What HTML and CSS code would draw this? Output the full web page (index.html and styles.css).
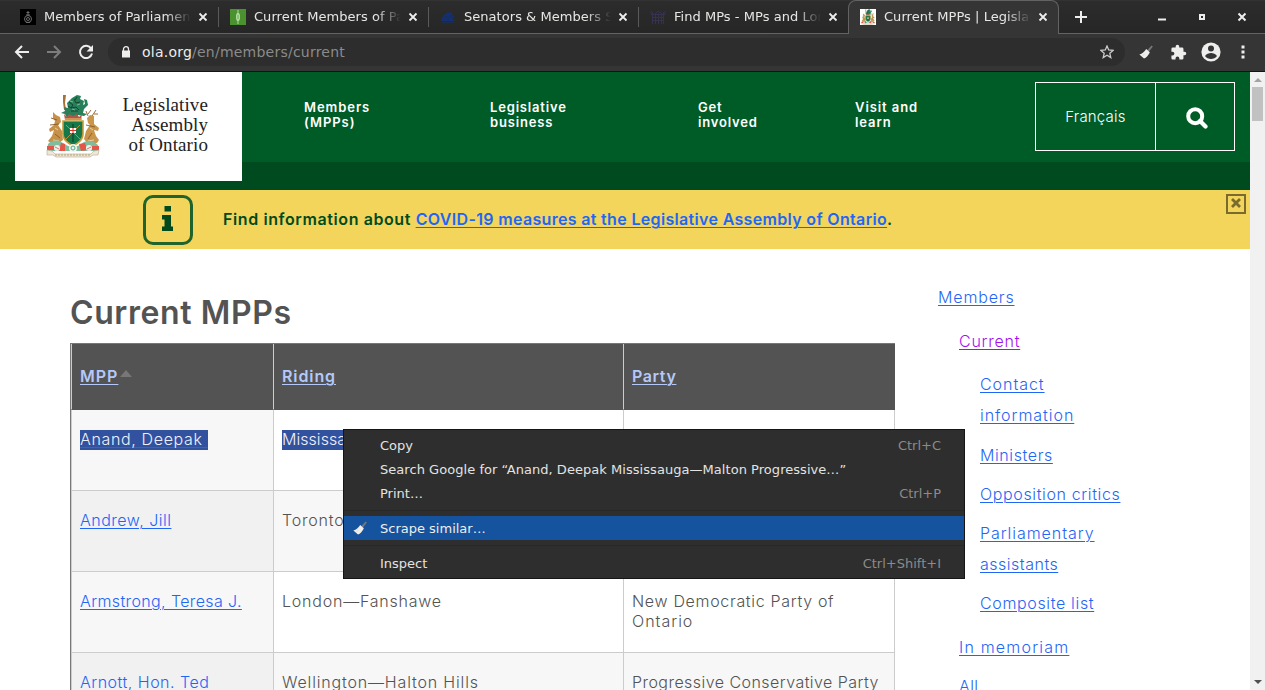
FILE: index.html
```html
<!DOCTYPE html>
<html lang="en">
<head>
<meta charset="utf-8">
<title>Current MPPs | Legislative Assembly of Ontario</title>
<link rel="stylesheet" href="styles.css">
</head>
<body>
<svg class="defs" width="0" height="0">
  <defs>
    <symbol id="crest" viewBox="0 0 54 64">
      <path d="M17 1l3 0-1 8 1 7h-2l-1-8z" fill="#a9713a"/>
      <path d="M21 9l5-5 5-3 4 1-1 3 4 2-1 4 2-1-1-5 3 1 1 5-4 4-1 4 4 1-3 2-6-1-3 3h-8l-2-4-4-1 4-2-1-4 4 1z" fill="#28805a"/>
      <path d="M23 8l4 3-2 3 5-1 3 3M28 5l2 4 4-1M25 17h7M31 3l-2 3M22 12l3 2" stroke="#12442f" fill="none"/>
      <path d="M24 7l3 1M31 11l3-1M26 15l3 1" stroke="#9cc9b4" stroke-width=".7"/>
      <path d="M18 20l3 3 2-3 4 2 4-2 2 3 3-3-1 6H19z" fill="#b0564a"/>
      <path d="M19 25h17" stroke="#d9a95a" stroke-width="1.500"/>
      <path d="M7 18l3 3 4 2 1 5-3 3 4 6 1 9-4 3H5l-3-2 4-5 2-6-4 2-1-3 5-4 1-4-2-3z" fill="#c6924a"/>
      <path d="M48 22l-4-1-3 3 1 5 2 2-4 6-2 8 3 4h10l2-3-3-4-2-6 4 1 1-3-5-4z" fill="#c9954a"/>
      <path d="M42 22l-2-5m2 3l3-4m1 6l4-6m-2 4l4 0M5 24l6 2M4 31l9-1M40 31l9 2M9 40l5 4M46 39l-4 6" stroke="#8b5a25" fill="none" stroke-width=".9"/>
      <path d="M9 34l3 2M44 34l3 2M7 46l6 1M42 47l6-1" stroke="#ecd3a4"/>
      <path d="M17 27h20v13c0 6-5 9-10 12-5-3-10-6-10-12z" fill="#157848" stroke="#c99b3b" stroke-width="1.600"/>
      <path d="M20 31l14 14M34 31L20 45" stroke="#b3913f" stroke-width="1"/>
      <path d="M27 30v18" stroke="#0d4e30" stroke-width="1.500"/>
      <path d="M24 34h6v5h-6z" fill="#fff"/><path d="M24 36.500h6M27 34v5" stroke="#d9352d"/>
      <path d="M2 50c6-6 12-3 15-1l5 3h10l6-4c6-2 10-1 14 3l1 6H1z" fill="#7fbd9f"/>
      <path d="M1 52h7v4H1zM15 49l4 1v7h-6zM33 50l6-1 2 7-6 1zM46 52h7v4h-7z" fill="#e5564a"/>
      <circle cx="11" cy="54" r="3" fill="#f3eeec"/><circle cx="27" cy="54" r="4" fill="#edf5f2"/><circle cx="43" cy="54" r="3" fill="#f3eeec"/>
      <circle cx="27" cy="54" r="2" fill="none" stroke="#57a583"/><path d="M9 53l4 2M41 55l4-2" stroke="#e2756b"/>
      <path d="M1 56l5 1 3 3h36l3-3 5-1-1 5h-5l-3 2H10l-3-2H1z" fill="#eee8dc" stroke="#b8a78a" stroke-width=".6"/>
      <path d="M9 61h36" stroke="#b59f78" stroke-dasharray="2 1"/>
    </symbol>
    <symbol id="broom" viewBox="0 0 16 16">
      <path d="M9 6.500L13.500 1.500l1.300 1.100L10.700 8z" fill="#777"/>
      <path d="M8.200 5l3.600 3.200-.6 1.200c-1.200 2.300-2.800 3.900-5.200 5.200L1.400 10.500c3-.8 4.800-2.500 6.800-5.500z" fill="#eeeeec"/>
      <path d="M4 12l3-2.200" stroke="#ccc" stroke-width=".5"/>
    </symbol>
    <symbol id="cross" viewBox="0 0 10 10"><path d="M1.500 1.500l7 7M8.500 1.500l-7 7" stroke="#eeeeec" stroke-width="1.800"/></symbol>
  </defs>
</svg>

<div class="window">
  <header class="tabstrip">
    <div class="tab">
      <svg class="favicon" viewBox="0 0 16 16"><path fill="#000" d="M0 0h16v16H0z"/><g fill="none" stroke="#6c6c6c"><circle cx="8" cy="10" r="3.500"/><circle cx="8" cy="10" r="1.500"/><path d="M8 2v4M6.500 3.500h3M6 6h4M6 13.500h4"/></g></svg>
      <span class="tab-title">Members of Parliament</span><svg class="close"><use href="#cross"/></svg>
    </div>
    <div class="tab">
      <svg class="favicon" viewBox="0 0 16 16"><path fill="#4b9130" d="M0 0h16v16H0z"/><path d="M8 1v14" stroke="#b5dca5"/><path d="M7 4h2l1 2v4l-1 2H7l-1-2V6z" fill="#a9d996"/><path d="M8 6v4" stroke="#6eae56"/></svg>
      <span class="tab-title">Current Members of Parl</span><svg class="close"><use href="#cross"/></svg>
    </div>
    <div class="tab">
      <svg class="favicon" viewBox="0 0 16 16"><path d="M1 12c0-3 2-4 3-6l3-2 1-1 1 1 3-1 0 3 3 1-2 1 1 4z" fill="#123078"/><path d="M3 11l3-4 2 4 3-5 2 5M2 13.500h12" stroke="#202d48" fill="none"/></svg>
      <span class="tab-title">Senators &amp; Members Sea</span><svg class="close"><use href="#cross"/></svg>
    </div>
    <div class="tab tab-last">
      <svg class="favicon" viewBox="0 0 16 16"><path d="M2.500 3v12M5.500 4v11M8.500 4v11M11.500 4v11M13.500 3v12M1 5.500h14M2 8.500h12M2 11.500h12M6 4l2-2 3 2M1 2v3M15 2v3" stroke="#37304f" fill="none"/></svg>
      <span class="tab-title">Find MPs - MPs and Lords</span><svg class="close"><use href="#cross"/></svg>
    </div>
    <div class="tab tab-active">
      <svg class="favicon" viewBox="0 0 16 16"><path fill="#fff" d="M0 0h16v16H0z"/><use href="#crest" width="16" height="16"/></svg>
      <span class="tab-title">Current MPPs | Legislative</span><svg class="close"><use href="#cross"/></svg>
    </div>
    <svg class="newtab" viewBox="0 0 12 12"><path d="M6 0v12M0 6h12" stroke="#eeeeec" stroke-width="2"/></svg>
    <svg class="controls" viewBox="0 0 90 12"><path d="M0 8.500h8" stroke="#eeeeec" stroke-width="2"/><path d="M42 4h4v4h-4z" stroke="#eeeeec" stroke-width="2" fill="none"/><path d="M80.500 2.500l7 7M87.500 2.500l-7 7" stroke="#eeeeec" stroke-width="2"/></svg>
  </header>

  <div class="toolbar">
    <svg class="tool back" viewBox="0 0 16 16"><path d="M15 8H2M8 2L2 8l6 6" stroke="#eeeeec" stroke-width="2" fill="none"/></svg>
    <svg class="tool forward" viewBox="0 0 16 16"><path d="M1 8h13M8 2l6 6-6 6" stroke="#7d7d7c" stroke-width="2" fill="none"/></svg>
    <svg class="tool reload" viewBox="0 0 16 16"><path d="M13.200 4.600A6.100 6.100 0 1 0 14 9.500" stroke="#eeeeec" stroke-width="2" fill="none"/><path d="M15 1v6.500H8.500z" fill="#eeeeec"/></svg>
    <div class="omnibox">
      <svg class="lock" viewBox="0 0 10 12"><path d="M1 4.500h8v7H1z" fill="#eeeeec"/><path d="M2.500 5V3.200a2.500 2.500 0 0 1 5 0V5" stroke="#eeeeec" stroke-width="1.300" fill="none"/></svg>
      <span class="url"><b>ola.org</b>/en/members/current</span>
      <svg class="star" viewBox="0 0 14 14"><path d="M7 1l1.700 4 4.400.4-3.300 2.900 1 4.300L7 10.300l-3.800 2.300 1-4.300L.9 5.400 5.300 5z" stroke="#ccccca" stroke-width="1.300" fill="none"/></svg>
    </div>
    <svg class="ext-broom"><use href="#broom"/></svg>
    <svg class="ext-puzzle" viewBox="0 0 24 24"><path fill="#eeeeec" d="M20.500 11H19V7a2 2 0 0 0-2-2h-4V3.500a2.500 2.500 0 0 0-5 0V5H4a2 2 0 0 0-2 2v3.800h1.500a2.700 2.700 0 0 1 0 5.400H2V20a2 2 0 0 0 2 2h3.800v-1.500a2.700 2.700 0 0 1 5.400 0V22H17a2 2 0 0 0 2-2v-4h1.500a2.500 2.500 0 0 0 0-5z"/></svg>
    <svg class="ext-user" viewBox="0 0 20 20"><circle cx="10" cy="10" r="9.600" fill="#eeeeec"/><circle cx="10" cy="6.500" r="3" fill="#353535"/><path d="M4 14c1-2 4-3 6-3s5 1 6 3c-1 2-4 3-6 3s-5-1-6-3z" fill="#353535"/></svg>
    <svg class="ext-more" viewBox="0 0 4 14"><path d="M.5.500h3v3h-3zM.5 5.500h3v3h-3zM.5 10.500h3v3h-3z" fill="#eeeeec"/></svg>
  </div>

  <div class="viewport">
    <div class="page">
      <div class="masthead">
        <div class="logo">
          <svg class="logo-crest"><use href="#crest"/></svg>
          <div class="logo-name">Legislative<br>Assembly<br>of Ontario</div>
        </div>
        <nav class="mainnav">
          <a class="nav-members">Members<br>(MPPs)</a>
          <a class="nav-business">Legislative<br>business</a>
          <a class="nav-get">Get<br>involved</a>
          <a class="nav-visit">Visit and<br>learn</a>
        </nav>
        <div class="actions">
          <a class="lang">Français</a>
          <svg class="search" viewBox="0 0 22 22"><circle cx="9.200" cy="9.200" r="7" stroke="#fff" stroke-width="4" fill="none"/><path d="M14 14l5.500 5.500" stroke="#fff" stroke-width="4.200" stroke-linecap="round"/></svg>
        </div>
      </div>
      <div class="notice">
        <div class="info"><svg viewBox="0 0 12 25"><path d="M3.500 0H10v5.500H3.500zM1 9h9v11.500h2V25H1v-4.500h2.500v-7H1z" fill="#004a1e"/></svg></div>
        <p class="notice-text">Find information about <a>COVID-19 measures at the Legislative Assembly of Ontario</a>.</p>
        <div class="dismiss"><svg viewBox="0 0 10 10"><path d="M1 1l8 8M9 1L1 9" stroke="#796b2d" stroke-width="2.800"/></svg></div>
      </div>
      <div class="content">
        <main>
          <h1>Current MPPs</h1>
          <div class="table">
            <div class="row head"><div><a class="t-mpp">MPP</a><i class="sort"></i></div><div><a class="t-riding">Riding</a></div><div><a class="t-party">Party</a></div></div>
            <div class="row"><div><a class="sel t-anand">Anand, Deepak&nbsp;</a></div><div><span class="sel t-miss">Mississauga—Malton</span></div><div></div></div>
            <div class="row alt"><div><a class="t-andrew">Andrew, Jill</a></div><div><span class="t-toronto">Toronto—St. Paul's</span></div><div></div></div>
            <div class="row"><div><a class="t-armstrong">Armstrong, Teresa J.</a></div><div><span class="t-london">London—Fanshawe</span></div><div><span class="t-ndp">New Democratic Party of</span><br><span class="t-ontario">Ontario</span></div></div>
            <div class="row alt"><div><a class="t-arnott">Arnott, Hon. Ted</a></div><div><span class="t-well">Wellington—Halton Hills</span></div><div><span class="t-pc">Progressive Conservative Party</span></div></div>
          </div>
        </main>
        <aside>
          <a class="s-members">Members</a>
          <a class="l2 current">Current</a>
          <a class="l3 s-contact">Contact<br>information</a>
          <a class="l3 s-ministers">Ministers</a>
          <a class="l3 s-opp">Opposition critics</a>
          <a class="l3 s-parl">Parliamentary<br><span class="s-assist">assistants</span></a>
          <a class="l3 s-comp">Composite list</a>
          <a class="l2 s-mem">In memoriam</a>
          <a class="l2 s-all">All</a>
        </aside>
      </div>
    </div>
    <div class="scrollbar"><i class="up"></i><i class="thumb"></i><i class="down"></i></div>
  </div>

  <div class="menu">
    <div class="item"><span>Copy</span><kbd>Ctrl+C</kbd></div>
    <div class="item"><span class="m-search">Search Google for “Anand, Deepak Mississauga—Malton Progressive…”</span></div>
    <div class="item"><span>Print…</span><kbd>Ctrl+P</kbd></div>
    <hr>
    <div class="item hot"><svg class="item-icon"><use href="#broom"/></svg><span>Scrape similar…</span></div>
    <hr class="wide">
    <div class="item"><span>Inspect</span><kbd>Ctrl+Shift+I</kbd></div>
  </div>
</div>
</body>
</html>
```
FILE: styles.css
```css
* { box-sizing: border-box; }
body { margin: 0; overflow: hidden; background: #fff; }
svg { display: block; flex: none; }
.defs { position: absolute; }
.window { position: relative; width: 1265px; height: 690px; display: flex; flex-direction: column; overflow: hidden; }

/* Browser chrome */
.tabstrip { flex: none; height: 34px; display: flex; background: linear-gradient(#383838 0, #2c2c2c 1px, #262626 100%); border-bottom: 1px solid #636363; padding-left: 9px; font: 13px "DejaVu Sans", sans-serif; color: #e6e6e4; }
.tab { flex: none; width: 210px; height: 33px; display: flex; align-items: center; padding: 0 10px 0 11px; background: linear-gradient(#5a5a5a, #5a5a5a) 209px 7px / 1px 20px no-repeat; }
.tab-last { width: 209px; background: none; }
.tab-active { width: 211px; height: 34px; padding: 0 10px 1px 11px; background: #353535; border: 1px solid #636363; border-bottom: 0; border-radius: 8px 8px 0 0; }
.favicon { width: 16px; height: 16px; margin-right: 8px; }
.tab-title { width: 147px; flex: none; line-height: 20px; overflow: hidden; white-space: nowrap; letter-spacing: .04px; -webkit-mask-image: linear-gradient(90deg, #000 122px, transparent 147px); mask-image: linear-gradient(90deg, #000 122px, transparent 147px); }
.close { width: 10px; height: 10px; margin-left: 7px; }
.newtab { width: 12px; height: 12px; margin: 11px 0 0 16px; }
.controls { width: 90px; height: 12px; margin: 11px 0 0 71px; }
.toolbar { flex: none; height: 38px; display: flex; align-items: center; background: #353535; border-bottom: 1px solid #141414; padding: 0 0 1px 14px; }
.tool { width: 16px; height: 16px; margin-right: 16px; }
.reload { margin-right: 14px; }
.omnibox { width: 1017px; height: 28px; border-radius: 14px; background: #2d2d2d; display: flex; align-items: center; padding: 0 11px 0 13px; }
.lock { width: 10px; height: 12px; margin-right: 11px; }
.url { flex: 1; font: 14px/20px "DejaVu Sans", sans-serif; letter-spacing: .23px; color: #8b8b8a; }
.url b { font-weight: 400; color: #eeeeec; }
.star { width: 14px; height: 14px; }
.ext-broom { width: 16px; height: 16px; margin-left: 13px; }
.ext-puzzle { width: 17px; height: 17px; margin-left: 16px; }
.ext-user { width: 20px; height: 20px; margin-left: 14px; }
.ext-more { width: 4px; height: 14px; margin-left: 20px; }

/* Page */
.viewport { flex: 1; min-height: 0; display: flex; }
.page { width: 1250px; flex: none; height: 618px; overflow: hidden; font: 300 16px/20px Inter, sans-serif; color: #535353; }
.masthead { height: 118px; padding: 0 15px; display: flex; background: linear-gradient(#005c27 90px, #004a1f 90px); }
.logo { width: 227px; height: 109px; flex: none; background: #fff; display: flex; padding: 22px 34px 0 31px; justify-content: space-between; }
.logo-crest { width: 54px; height: 64px; }
.logo-name { font: 19px/20px "Liberation Serif", serif; letter-spacing: .1px; color: #222; text-align: right; padding-top: 1px; }
.mainnav { display: flex; flex: 1; padding: 28px 0 0 62px; color: #fff; font-weight: 600; font-size: 13px; line-height: 15px; letter-spacing: .82px; }
.nav-members { width: 186px; letter-spacing: .95px; }
.nav-business { width: 208px; }
.nav-get { width: 157px; }
.nav-visit { letter-spacing: .92px; }
.actions { width: 200px; height: 69px; margin-top: 10px; border: 1px solid #fff; display: flex; }
.lang { width: 120px; border-right: 1px solid #fff; color: #fff; text-align: center; font-size: 15px; letter-spacing: .2px; line-height: 67px; }
.search { width: 22px; height: 22px; margin: 24px 0 0 30px; }
.notice { height: 59px; background: #f2d55a; display: flex; padding-left: 143px; align-items: flex-start; color: #004a1e; }
.info { width: 50px; height: 50px; margin-top: 5px; border: 3px solid #20632b; border-radius: 10px; padding: 8px 0 0 15px; }
.info svg { width: 12px; height: 25px; }
.notice-text { flex: 1; margin: 19px 0 0 30px; font-weight: 600; letter-spacing: .6px; white-space: nowrap; }
.notice-text a { letter-spacing: .33px; }
.notice-text a, .row a, aside a { color: #1f66f6; text-decoration: underline; text-decoration-thickness: 1px; text-underline-offset: 2px; }
.dismiss { width: 20px; height: 20px; border: 2px solid #796b2d; margin: 4px 4px 0 0; padding: 2px 3px; }
.dismiss svg { width: 10px; height: 10px; }
.content { display: flex; padding-left: 70px; }
main { width: 825px; flex: none; }
h1 { margin: 44px 0 10px; font-size: 32px; line-height: 40px; font-weight: 600; letter-spacing: .6px; }
.table { border: 1px solid #777; border-width: 1px 0 0 1px; }
.row { display: grid; grid-template-columns: 203px 350px 271px; height: 81px; background: #fff; }
.row > div { padding: 19px 8px 0; border-right: 1px solid #ccc; border-bottom: 1px solid #ccc; white-space: nowrap; }
.row > div:first-child { border-left: 1px solid #ccc; background: #f7f7f7; }
.row.alt { background: #f7f7f7; }
.row.alt > div:first-child { background: #f1f1f1; }
.row.head { height: 66px; background: #535353; font-weight: 600; }
.row.head > div, .row.head > div:first-child { padding-top: 22px; background: #535353; border-bottom-color: #535353; }
.row.head > div:last-child { border-right-color: #535353; }
.row.head a { color: #b4c9fa; }
.sort { display: inline-block; border: 6px solid transparent; border-top: 0; border-bottom: 7px solid #777; margin: 0 0 5px 2px; }
.sel { display: inline-block; height: 20px; margin-top: 1px; line-height: 18px; background: #32529f; }
.row a.sel { color: #eef1fa; text-decoration-color: #1f66f6; }
span.sel { color: #eef1fa; }
aside { padding: 33px 0 0 43px; line-height: 31px; width: 300px; }
aside a { display: block; margin-bottom: 8px; }
aside .l2 { margin-left: 21px; }
aside .l3 { margin-left: 42px; }
aside .s-members { margin-bottom: 13px; }
aside .current { color: #a210ee; margin-bottom: 12px; }
aside .s-contact { margin-bottom: 9px; }
aside .s-comp { margin-bottom: 13px; }

/* Tracking of the individual labels */
.t-mpp { letter-spacing: 1px; }
.t-riding { letter-spacing: .9px; }
.t-party { letter-spacing: .6px; }
.t-anand { letter-spacing: .65px; }
.t-miss { letter-spacing: .05px; }
.t-andrew { letter-spacing: .5px; }
.t-toronto { letter-spacing: .8px; }
.t-armstrong { letter-spacing: .38px; }
.t-arnott { letter-spacing: .5px; }
.t-london { letter-spacing: .78px; }
.t-well { letter-spacing: .83px; }
.t-ndp { letter-spacing: .68px; }
.t-ontario { letter-spacing: 1px; }
.t-pc { letter-spacing: .45px; }
.s-members { letter-spacing: .85px; }
.current { letter-spacing: .75px; }
.s-contact { letter-spacing: .95px; }
.s-ministers { letter-spacing: .6px; }
.s-opp { letter-spacing: .63px; }
.s-parl { letter-spacing: .95px; }
.s-assist { letter-spacing: .5px; }
.s-comp { letter-spacing: .65px; }
.s-mem { letter-spacing: 1.2px; }
.s-all { letter-spacing: .4px; }
.m-search { letter-spacing: .045px; }

.scrollbar { width: 15px; background: #f1f1f1; display: flex; flex-direction: column; align-items: center; }
.up { border: 4px solid transparent; border-top: 0; border-bottom: 4px solid #a3a3a3; margin: 6px 0 5px; }
.thumb { width: 11px; height: 34px; background: #c1c1c1; }
.down { border: 4px solid transparent; border-bottom: 0; border-top: 4px solid #505050; margin: auto 0 6px; }

/* Context menu */
.menu { position: absolute; left: 343px; top: 429px; width: 622px; height: 150px; border: 1px solid #151515; background: #2e2e2e; padding-top: 4px; font: 13px/24px "DejaVu Sans", sans-serif; color: #e3e3e1; }
.item { position: relative; height: 24px; padding: 0 23px 0 36px; display: flex; justify-content: space-between; white-space: nowrap; }
.item kbd { font: inherit; color: #8b8b8a; }
.hot { background: #15539e; color: #eeeeec; line-height: 26px; }
.item-icon { position: absolute; left: 8px; top: 4px; width: 16px; height: 16px; }
.menu hr { margin: 4px 0; padding: 0; border: 0; border-top: 1px solid #282828; height: 2px; }
.menu hr.wide { margin: 5px 0; }
```
